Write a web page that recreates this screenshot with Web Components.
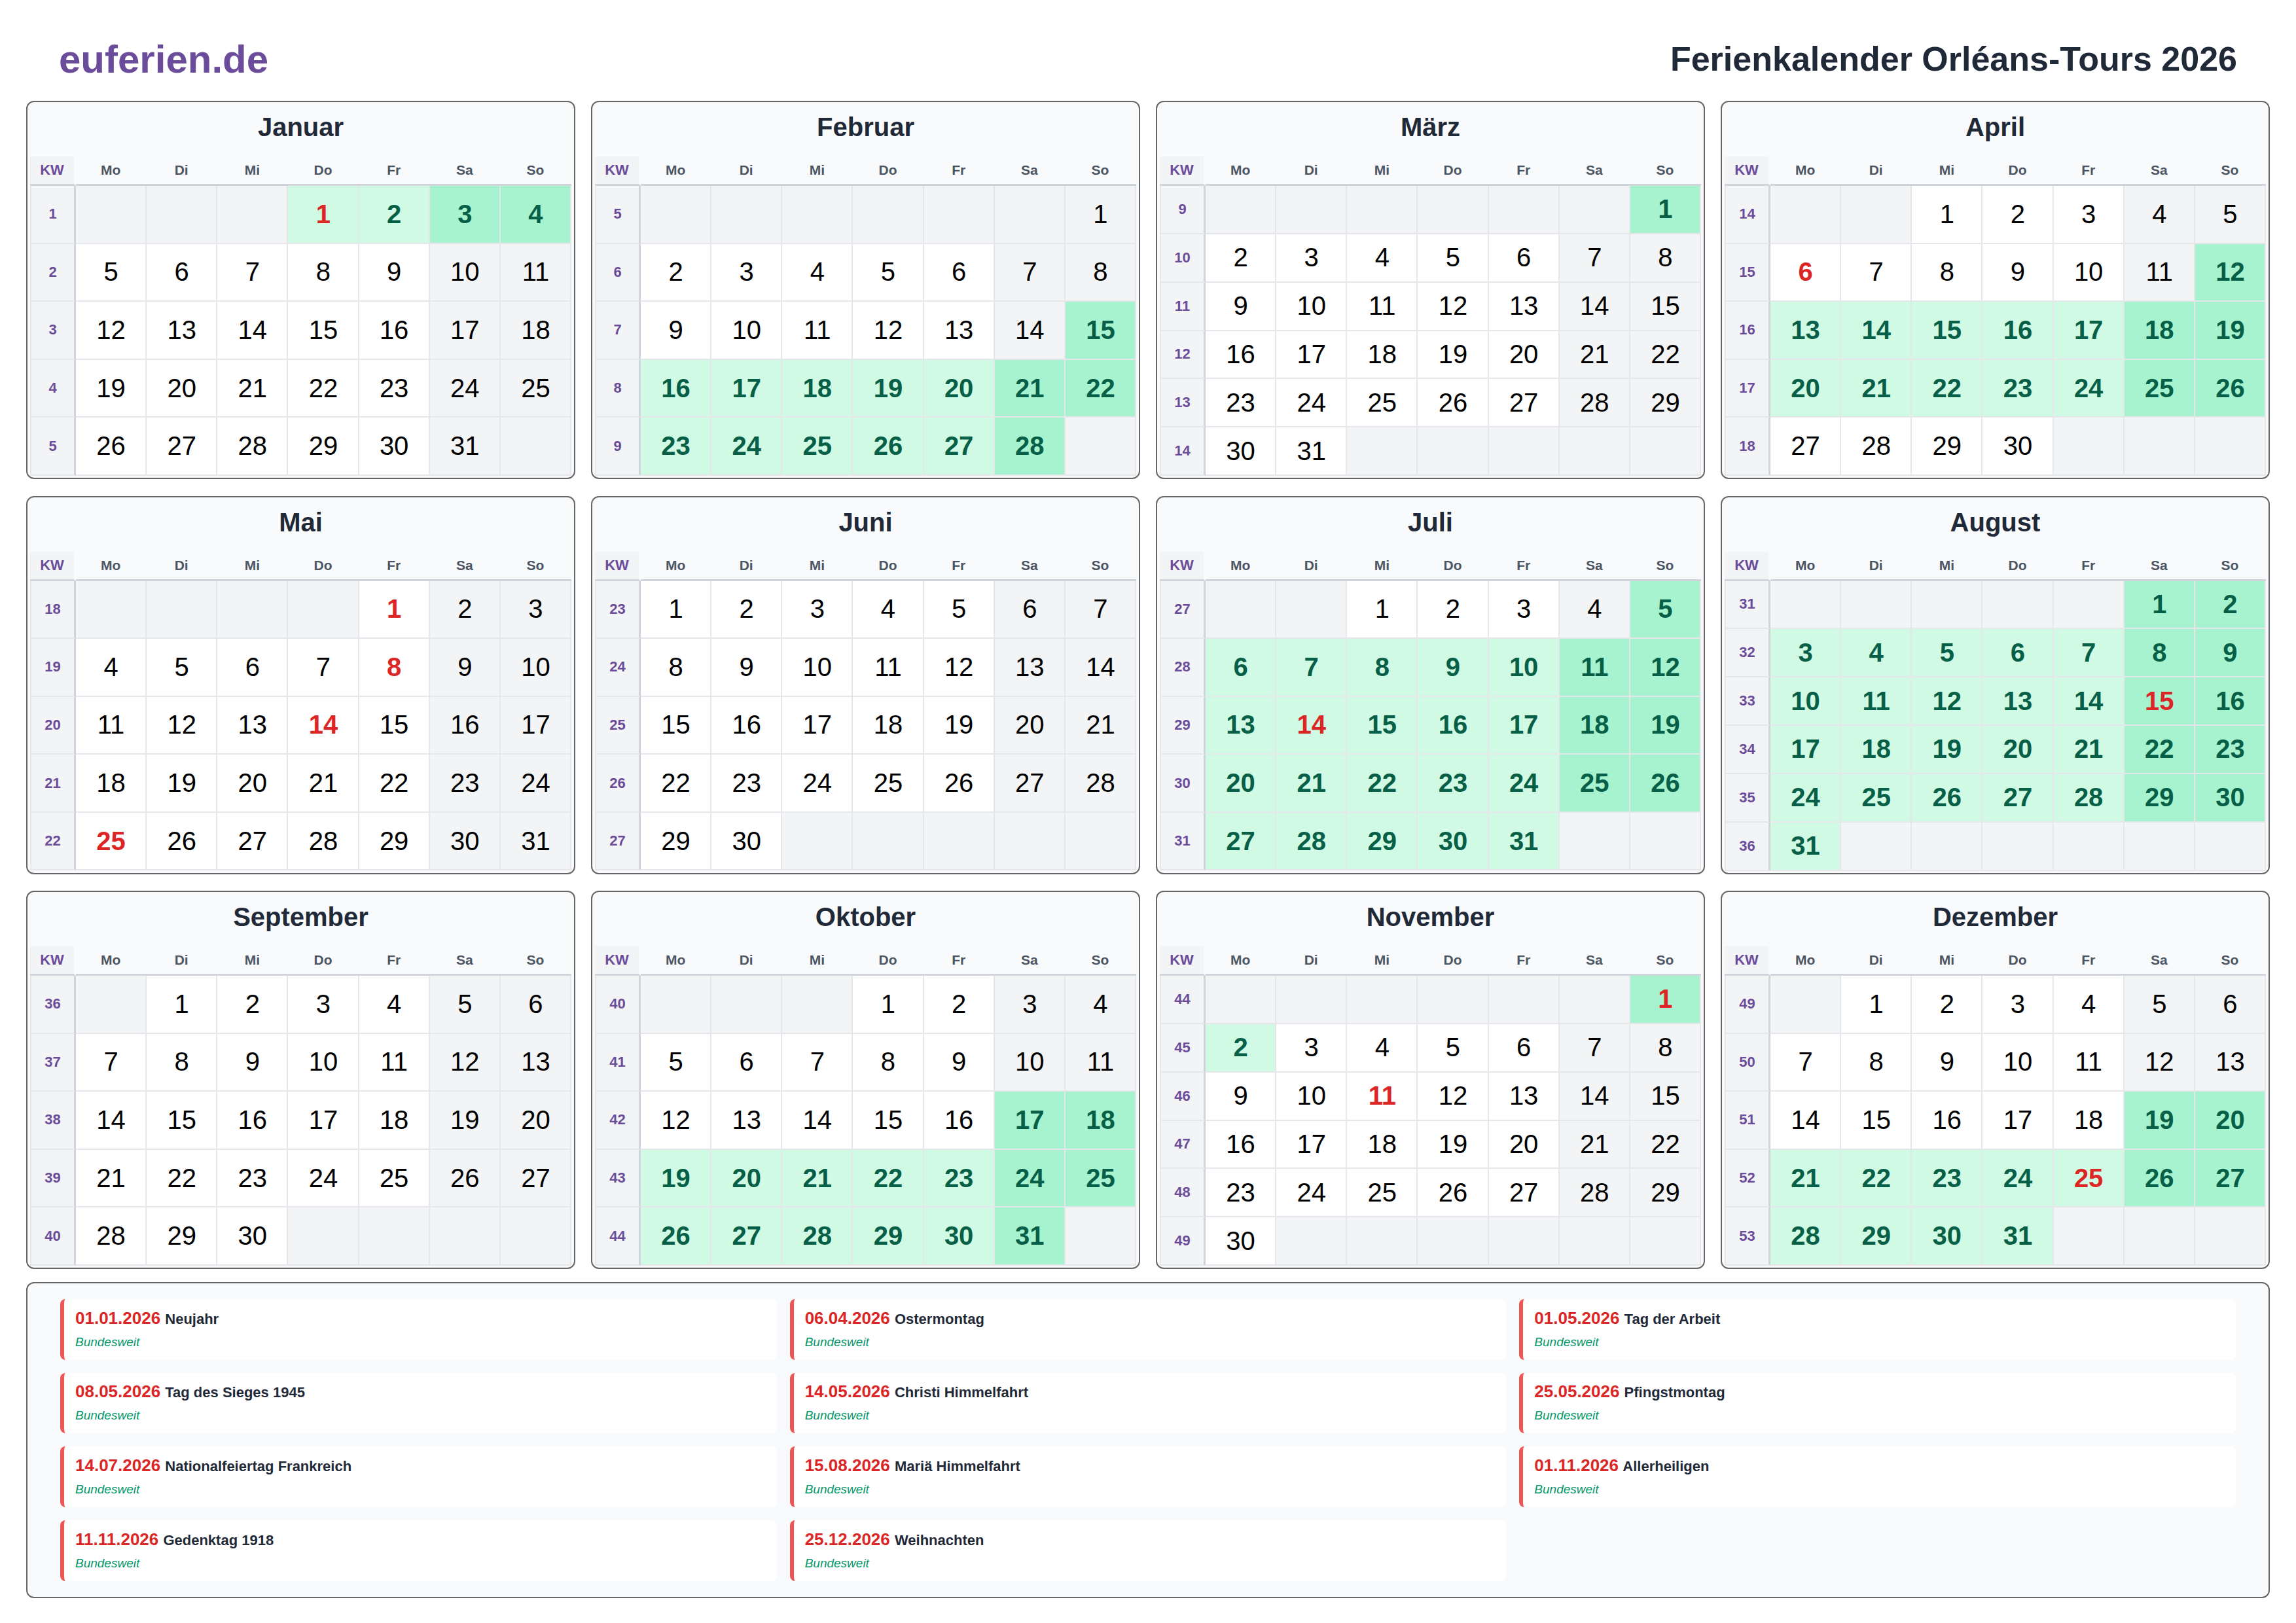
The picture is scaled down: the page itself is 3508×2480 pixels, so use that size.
<!DOCTYPE html>
<html lang="de">
<head>
<meta charset="utf-8">
<title>Ferienkalender Orléans-Tours 2026</title>
<style>
  html, body { margin: 0; background: #fff; }
  body { font-family: "Liberation Sans", Arial, sans-serif; padding: 0 40px; box-sizing: border-box; width: 3508px; height: 2480px; overflow: hidden; }
  .months { display: grid; grid-template-columns: repeat(4, 839px); grid-template-rows: repeat(3, 578px); column-gap: 24px; row-gap: 25.5px; }
</style>
</head>
<body>
<page-header logo="euferien.de" title="Ferienkalender Orléans-Tours 2026"></page-header>
<div class="months" id="months"></div>
<holiday-list id="holidays"></holiday-list>

<script>
const MONTH_NAMES = ['Januar', 'Februar', 'März', 'April', 'Mai', 'Juni', 'Juli', 'August', 'September', 'Oktober', 'November', 'Dezember'];
const DAY_NAMES = ['Mo', 'Di', 'Mi', 'Do', 'Fr', 'Sa', 'So'];
const YEAR = 2026;

// public holidays: date -> name
const HOLIDAYS = [
  ['01.01.2026', 'Neujahr'],
  ['06.04.2026', 'Ostermontag'],
  ['01.05.2026', 'Tag der Arbeit'],
  ['08.05.2026', 'Tag des Sieges 1945'],
  ['14.05.2026', 'Christi Himmelfahrt'],
  ['25.05.2026', 'Pfingstmontag'],
  ['14.07.2026', 'Nationalfeiertag Frankreich'],
  ['15.08.2026', 'Mariä Himmelfahrt'],
  ['01.11.2026', 'Allerheiligen'],
  ['11.11.2026', 'Gedenktag 1918'],
  ['25.12.2026', 'Weihnachten']
];

// school vacations, [month, day] inclusive
const VACATIONS = [
  [[1, 1], [1, 4]],
  [[2, 15], [3, 1]],
  [[4, 12], [4, 26]],
  [[7, 5], [8, 31]],
  [[10, 17], [11, 2]],
  [[12, 19], [12, 31]]
];

function isHoliday(m, d) {
  const key = String(d).padStart(2, '0') + '.' + String(m).padStart(2, '0') + '.' + YEAR;
  return HOLIDAYS.some(h => h[0] === key);
}

function isVacation(m, d) {
  const n = m * 100 + d;
  return VACATIONS.some(v => n >= v[0][0] * 100 + v[0][1] && n <= v[1][0] * 100 + v[1][1]);
}

function isoWeek(date) {
  const t = new Date(Date.UTC(date.getUTCFullYear(), date.getUTCMonth(), date.getUTCDate()));
  const day = t.getUTCDay() || 7;
  t.setUTCDate(t.getUTCDate() + 4 - day);
  const start = new Date(Date.UTC(t.getUTCFullYear(), 0, 1));
  return Math.ceil(((t - start) / 86400000 + 1) / 7);
}

class PageHeader extends HTMLElement {
  constructor() {
    super();
    this.attachShadow({ mode: 'open' });
    this.shadowRoot.innerHTML = `
      <style>
        :host { display: flex; justify-content: space-between; align-items: center; box-sizing: border-box; height: 154px; padding: 26px 50px 0; }
        .logo { font-size: 60px; font-weight: bold; color: #6b4c9a; }
        h1 { margin: 0; font-size: 52px; font-weight: bold; color: #1f2937; }
      </style>
      <div class="logo"></div>
      <h1></h1>
    `;
  }

  connectedCallback() {
    this.shadowRoot.querySelector('.logo').textContent = this.getAttribute('logo');
    this.shadowRoot.querySelector('h1').textContent = this.getAttribute('title');
  }
}
customElements.define('page-header', PageHeader);

class MonthCard extends HTMLElement {
  constructor() {
    super();
    this.attachShadow({ mode: 'open' });
    this.shadowRoot.innerHTML = `
      <style>
        :host { display: flex; flex-direction: column; box-sizing: border-box; height: 100%; min-height: 0; background: #f9fafb; border: 2px solid #666; border-radius: 12px; padding: 0 4px 3px; overflow: hidden; }
        h2 { margin: 0; flex: 0 0 83px; box-sizing: border-box; padding-bottom: 6px; display: flex; align-items: center; justify-content: center; font-size: 40px; font-weight: bold; color: #1f2937; }
        .grid { flex: 1; min-height: 0; display: grid; grid-template-columns: 70px repeat(7, 1fr); }
        .cell { display: flex; align-items: center; justify-content: center; box-sizing: border-box; min-width: 0; min-height: 0; }
        .head { font-size: 21px; font-weight: bold; color: #4b5563; border-bottom: 3px solid #d1d5db; padding-right: 2px; }
        .head.kw { font-size: 22px; color: #6b4c9a; background: #f3f4f6; background-clip: padding-box; border-right: 3px solid transparent; padding-right: 0; }
        .week { font-size: 22px; font-weight: bold; color: #6b4c9a; background: #f3f4f6; border-left: 2px solid #e5e7eb; border-right: 3px solid #d1d5db; border-bottom: 2px solid #e5e7eb; }
        .day { font-size: 40px; color: #000; background: #fff; border-right: 2px solid #e5e7eb; border-bottom: 2px solid #e5e7eb; padding-left: 1px; }
        .empty, .weekend { background: #f3f4f6; }
        .vacation { background: #d1fae5; color: #065f46; font-weight: bold; }
        .vacation.weekend { background: #a7f3d0; }
        .holiday { color: #dc2626; font-weight: bold; }
      </style>
      <h2></h2>
      <div class="grid"></div>
    `;
  }

  connectedCallback() {
    const month = Number(this.getAttribute('month'));
    this.shadowRoot.querySelector('h2').textContent = MONTH_NAMES[month - 1];
    const grid = this.shadowRoot.querySelector('.grid');

    let html = '<div class="cell head kw">KW</div>';
    html += DAY_NAMES.map(n => `<div class="cell head">${n}</div>`).join('');

    const first = new Date(Date.UTC(YEAR, month - 1, 1));
    const last = new Date(Date.UTC(YEAR, month, 0)).getUTCDate();
    const offset = (first.getUTCDay() + 6) % 7;
    const rows = Math.ceil((offset + last) / 7);

    for (let r = 0; r < rows; r++) {
      const monday = new Date(Date.UTC(YEAR, month - 1, 1 - offset + r * 7));
      html += `<div class="cell week">${isoWeek(monday)}</div>`;
      for (let c = 0; c < 7; c++) {
        const d = r * 7 + c - offset + 1;
        if (d < 1 || d > last) {
          html += '<div class="cell day empty"></div>';
          continue;
        }
        const cls = ['cell', 'day'];
        if (c >= 5) cls.push('weekend');
        if (isVacation(month, d)) cls.push('vacation');
        if (isHoliday(month, d)) cls.push('holiday');
        html += `<div class="${cls.join(' ')}">${d}</div>`;
      }
    }
    grid.style.gridTemplateRows = `45px repeat(${rows}, 1fr)`;
    grid.innerHTML = html;
  }
}
customElements.define('month-card', MonthCard);

class HolidayList extends HTMLElement {
  constructor() {
    super();
    this.attachShadow({ mode: 'open' });
    this.shadowRoot.innerHTML = `
      <style>
        :host { display: block; box-sizing: border-box; margin-top: 20px; background: #f9fafb; border: 2px solid #666; border-radius: 12px; padding: 24px 50px; }
        .items { display: grid; grid-template-columns: repeat(3, 1fr); grid-auto-rows: 92.67px; gap: 20px; }
      </style>
      <div class="items"><slot></slot></div>
    `;
  }
}
customElements.define('holiday-list', HolidayList);

class HolidayItem extends HTMLElement {
  constructor() {
    super();
    this.attachShadow({ mode: 'open' });
    this.shadowRoot.innerHTML = `
      <style>
        :host { display: flex; flex-direction: column; justify-content: center; gap: 11px; box-sizing: border-box; background: #fff; border-left: 6px solid #ee5555; border-radius: 8px; padding: 0 17px; }
        .line { font-size: 22px; font-weight: bold; color: #1f2937; line-height: 26px; white-space: nowrap; }
        .date { font-size: 26px; color: #dc2626; margin-right: 1px; }
        .scope { font-size: 19px; font-style: italic; color: #059669; line-height: 22px; }
      </style>
      <div class="line"><span class="date"></span> <span class="name"></span></div>
      <div class="scope">Bundesweit</div>
    `;
  }

  connectedCallback() {
    this.shadowRoot.querySelector('.date').textContent = this.getAttribute('date');
    this.shadowRoot.querySelector('.name').textContent = this.getAttribute('name');
  }
}
customElements.define('holiday-item', HolidayItem);

const months = document.getElementById('months');
for (let m = 1; m <= 12; m++) {
  const card = document.createElement('month-card');
  card.setAttribute('month', m);
  months.appendChild(card);
}

const list = document.getElementById('holidays');
for (const [date, name] of HOLIDAYS) {
  const item = document.createElement('holiday-item');
  item.setAttribute('date', date);
  item.setAttribute('name', name);
  list.appendChild(item);
}
</script>
</body>
</html>
